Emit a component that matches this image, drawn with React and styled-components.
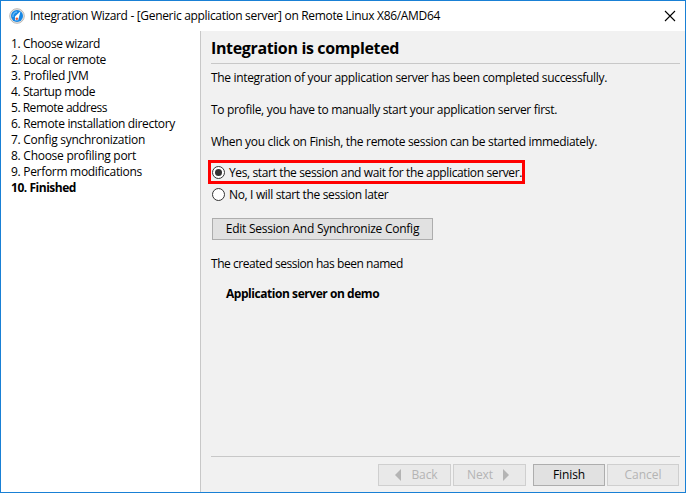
import React from 'react';
import styled, { createGlobalStyle } from 'styled-components';

const GlobalStyle = createGlobalStyle`
  * { box-sizing: border-box; }
  body { margin: 0; background: #fff; }
`;

const Window = styled.div`
  display: flex;
  flex-direction: column;
  width: 686px;
  height: 493px;
  border: 1px solid #1980d5;
  background: #fff;
  color: #000;
  font: 12px/16px "Open Sans", "Noto Sans", sans-serif;
  white-space: nowrap;
`;

const Label = styled.span`
  letter-spacing: ${(p) => p.$spacing ?? -0.32}px;
`;

const TitleBar = styled.header`
  display: flex;
  align-items: center;
  flex: 0 0 30px;
  padding: 0 9px 0 8px;
`;

const Title = styled.div`
  flex: 1;
  margin-left: 5px;
`;

const CloseButton = styled.button`
  display: flex;
  padding: 0;
  border: 0;
  background: none;
`;

const Body = styled.div`
  display: flex;
  flex: 1;
  min-height: 0;
`;

const Steps = styled.ol`
  flex: 0 0 199px;
  margin: 0;
  padding: 5px 0 0 10px;
  list-style: none;
`;

const Step = styled.li`
  height: 16px;
  font-weight: ${(p) => (p.$current ? 700 : 400)};
`;

const Panel = styled.main`
  display: flex;
  flex-direction: column;
  flex: 1;
  padding: 0 5px 6px 10px;
  border-left: 1px solid #c8c8c8;
  background: #f1f1f1;
`;

const Heading = styled.h1`
  height: 33px;
  margin: 0 0 6px;
  padding-top: 6px;
  border-bottom: 1px solid #c8c8c8;
  font-size: 16px;
  line-height: 22px;
`;

const Paragraph = styled.p`
  height: 16px;
  margin: 0 0 16px;
`;

const RadioGroup = styled.div`
  display: flex;
  flex-direction: column;
  align-items: flex-start;
  margin: -6px 0 0 -3px;
`;

const RadioOption = styled.label`
  display: flex;
  align-items: center;
  gap: 4px;
  width: 317px;
  height: ${(p) => (p.$highlighted ? 24 : 16)}px;
  margin-bottom: 3px;
  padding: ${(p) => (p.$highlighted ? '1px 0 0' : '0 0 0 3px')};
  border: ${(p) => (p.$highlighted ? '3px solid #f00' : '0')};
`;

const RadioLabel = styled(Label)`
  padding-top: ${(p) => (p.$lowered ? 1 : 0)}px;
`;

const Button = styled.button`
  display: flex;
  align-items: center;
  justify-content: center;
  width: ${(p) => p.$width}px;
  height: 22px;
  padding: 0;
  border: 1px solid ${(p) => (p.disabled ? '#cfcfcf' : '#adadad')};
  background: ${(p) => (p.disabled ? '#e9e9e9' : '#e1e1e1')};
  color: ${(p) => (p.disabled ? '#b4b4b4' : '#000')};
  font: inherit;
`;

const BackButton = styled(Button)`
  padding-left: 4px;
`;

const NextButton = styled(Button)`
  padding-right: 3px;
`;

const EditButton = styled(Button)`
  margin: 12px 0 16px 1px;
`;

const SessionName = styled.strong`
  margin: -2px 0 0 15px;
`;

const Footer = styled.footer`
  display: flex;
  justify-content: flex-end;
  gap: 2px;
  margin-top: auto;
  padding: 7px 1px 0 0;
  border-top: 1px solid #c8c8c8;
`;

const FinishButton = styled(Button)`
  margin-left: 5px;
`;

const BackArrow = styled.svg`
  margin-right: 10px;
`;

const NextArrow = styled.svg`
  margin-left: 10px;
`;

function AppIcon() {
  return (
    <svg width="16" height="16" viewBox="0 0 16 16">
      <circle cx="8" cy="8" r="7.3" fill="#e7e5e3" stroke="#bcb8b5" strokeWidth="1" />
      <circle cx="8" cy="8" r="6" fill="#1687e5" />
      <path d="M4 9a4.2 4.2 0 0 1 4-5" fill="none" stroke="#69b8f5" strokeWidth="1.3" />
      <path d="M11.5 3.2 6 8.5v3.8h3.2Z" fill="#fff" />
      <circle cx="7.8" cy="10.8" r="1.3" fill="#e65b39" />
    </svg>
  );
}

function RadioMark({ checked }) {
  return (
    <svg width="14" height="14" viewBox="0 0 14 14">
      <circle cx="7.5" cy="6.5" r="6" fill="#fff" stroke="#333" />
      {checked && <circle cx="7.5" cy="6.5" r="3.5" fill="#333" />}
    </svg>
  );
}

const steps = [
  ['1. Choose wizard', -0.37],
  ['2. Local or remote', -0.356],
  ['3. Profiled JVM', -0.229],
  ['4. Startup mode', -0.404],
  ['5. Remote address', -0.48],
  ['6. Remote installation directory', -0.334],
  ['7. Config synchronization', -0.274],
  ['8. Choose profiling port', -0.266],
  ['9. Perform modifications', -0.299],
  ['10. Finished', -0.466],
];

export default function App() {
  return (
    <>
      <GlobalStyle />
      <Window>
        <TitleBar>
          <AppIcon />
          <Title>
            <Label $spacing={-0.324}>
              Integration Wizard - [Generic application server] on Remote Linux X86/AMD64
            </Label>
          </Title>
          <CloseButton aria-label="Close">
            <svg width="12" height="12" viewBox="0 0 12 12">
              <path d="m1 1 10 10M11 1 1 11" fill="none" stroke="#000" strokeWidth="1.1" />
            </svg>
          </CloseButton>
        </TitleBar>
        <Body>
          <Steps>
            {steps.map(([text, spacing], index) => (
              <Step key={text} $current={index === 9}>
                <Label $spacing={spacing}>{text}</Label>
              </Step>
            ))}
          </Steps>
          <Panel>
            <Heading>
              <Label $spacing={-0.35}>Integration is completed</Label>
            </Heading>
            <Paragraph>
              <Label $spacing={-0.326}>
                The integration of your application server has been completed successfully.
              </Label>
            </Paragraph>
            <Paragraph>
              <Label $spacing={-0.314}>
                To profile, you have to manually start your application server first.
              </Label>
            </Paragraph>
            <Paragraph>
              <Label $spacing={-0.313}>
                When you click on Finish, the remote session can be started immediately.
              </Label>
            </Paragraph>
            <RadioGroup>
              <RadioOption $highlighted>
                <RadioMark checked />
                <RadioLabel $lowered $spacing={-0.375}>
                  Yes, start the session and wait for the application server.
                </RadioLabel>
              </RadioOption>
              <RadioOption>
                <RadioMark />
                <RadioLabel $spacing={-0.345}>No, I will start the session later</RadioLabel>
              </RadioOption>
            </RadioGroup>
            <EditButton $width={221}>
              <Label $spacing={-0.25}>Edit Session And Synchronize Config</Label>
            </EditButton>
            <Paragraph>
              <Label $spacing={-0.452}>The created session has been named</Label>
            </Paragraph>
            <SessionName>
              <Label $spacing={-0.45}>Application server on demo</Label>
            </SessionName>
            <Footer>
              <BackButton $width={73} disabled>
                <BackArrow width="6" height="12" viewBox="0 0 6 12">
                  <path d="M6 0v12L0 6Z" fill="#b4b4b4" />
                </BackArrow>
                <Label $spacing={-0.118}>Back</Label>
              </BackButton>
              <NextButton $width={73} disabled>
                <Label $spacing={-0.083}>Next</Label>
                <NextArrow width="6" height="12" viewBox="0 0 6 12">
                  <path d="M0 0v12l6-6Z" fill="#b4b4b4" />
                </NextArrow>
              </NextButton>
              <FinishButton $width={72}>
                <Label $spacing={-0.115}>Finish</Label>
              </FinishButton>
              <Button $width={72} disabled>
                <Label $spacing={-0.017}>Cancel</Label>
              </Button>
            </Footer>
          </Panel>
        </Body>
      </Window>
    </>
  );
}
